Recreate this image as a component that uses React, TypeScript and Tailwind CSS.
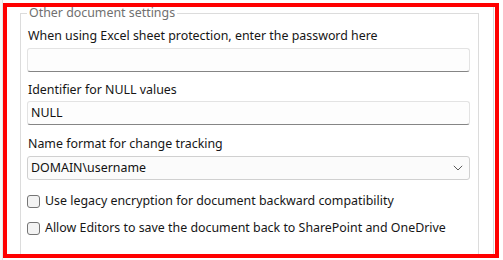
import React from "react";

const font = { fontFamily: '"Noto Sans", "Open Sans", Arial, sans-serif' };

function TextBox({ value }: { value?: string }) {
  return (
    <div className="h-[24px] w-full rounded-[3px] border border-[#e3e3e3] border-b-[#858585] bg-[#fdfdfd] px-[3px] flex items-center text-[12.4px] text-[#111]">
      {value}
    </div>
  );
}

function Check({ label }: { label: string }) {
  return (
    <div className="flex items-center h-[16px] gap-[5px]">
      <div className="w-[13px] h-[13px] rounded-[3px] border border-[#757575] bg-[#f3f3f3] shrink-0" />
      <span className="text-[12.4px] leading-[16px] text-[#161616]">{label}</span>
    </div>
  );
}

export default function App() {
  return (
    <div className="w-[503px] h-[260px] bg-white overflow-hidden flex" style={font}>
      <div className="w-[3px] h-full border-r border-[#e4e4e4] bg-[#f7f7f7] shrink-0" />
      <div className="mt-[3px] w-[496px] h-[255px] border-4 border-[#ff0000] overflow-hidden flex">
        <fieldset className="ml-[13px] w-[459px] h-[300px] border border-[#dcdcdc] px-[6px] pt-[9px] shrink-0">
          <legend className="ml-0 px-[2px] text-[12.4px] leading-[12px] text-[#707070]">Other document settings</legend>
          <div className="flex flex-col w-[443px]">
            <div className="text-[12.4px] leading-[16px] text-[#161616] pl-[1px]">
              When using Excel sheet protection, enter the password here
            </div>
            <div className="mt-[4px]">
              <TextBox />
            </div>
            <div className="mt-[10px] text-[12.4px] leading-[16px] text-[#161616] pl-[1px]">
              Identifier for NULL values
            </div>
            <div className="mt-[3px]">
              <TextBox value="NULL" />
            </div>
            <div className="mt-[11px] text-[12.4px] leading-[16px] text-[#161616] pl-[1px]">
              Name format for change tracking
            </div>
            <div className="mt-[4px] h-[24px] rounded-[3px] border border-[#d0d0d0] bg-[#fbfbfb] flex items-center justify-between pl-[3px] pr-[6px] text-[12.4px] text-[#111]">
              <span>DOMAIN\username</span>
              <svg width="10" height="6" viewBox="0 0 10 6" fill="none">
                <path d="M0.8 0.8 L5 5 L9.2 0.8" stroke="#5c5c5c" strokeWidth="1" />
              </svg>
            </div>
            <div className="mt-[13px]">
              <Check label="Use legacy encryption for document backward compatibility" />
            </div>
            <div className="mt-[11px]">
              <Check label="Allow Editors to save the document back to SharePoint and OneDrive" />
            </div>
          </div>
        </fieldset>
        <div className="flex-1" />
        <div className="w-px h-full bg-[#d8d8d8] mr-[1px]" />
      </div>
    </div>
  );
}
